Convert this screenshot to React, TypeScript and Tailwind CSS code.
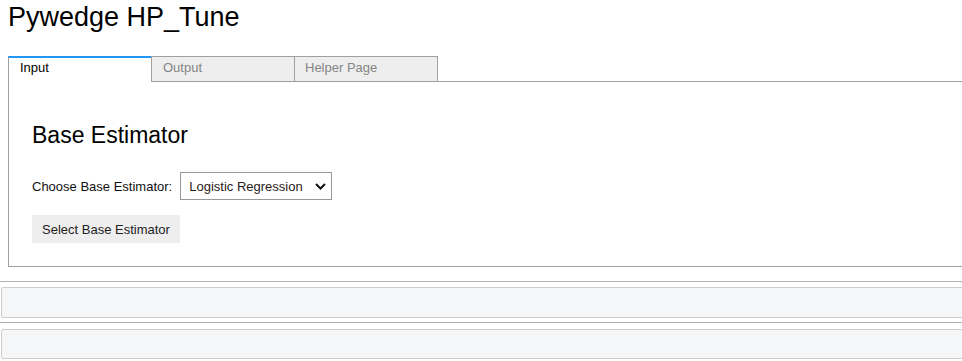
import React from "react";

export default function App() {
  return (
    <div className="w-[962px] h-[361px] overflow-hidden bg-white text-black font-['Liberation_Sans',Arial,sans-serif]">
      <h1 className="h-[56px] pt-[4px] pl-[8px] text-[27px] leading-[26px] font-normal">
        Pywedge HP_Tune
      </h1>
      <div className="pl-[8px] w-[1100px]">
        <div className="flex h-[26px] text-[13px] leading-[15px]">
          <div className="w-[143px] border-l border-l-[#a0a0a0] border-t-2 border-t-[#2196f3] bg-white pl-[11px] pt-[2px] text-black">
            Input
          </div>
          <div className="w-[143px] border border-r-0 border-[#a0a0a0] bg-[#eeeeee] pl-[11px] pt-[3px] text-[#858585]">
            Output
          </div>
          <div className="w-[144px] border border-[#a0a0a0] bg-[#eeeeee] pl-[10px] pt-[3px] text-[#858585]">
            Helper Page
          </div>
          <div className="flex-1 border-b border-[#a0a0a0]" />
        </div>
        <div className="border-l border-b border-[#a0a0a0] pl-[23px] pt-[40px] pb-[23px]">
          <h2 className="text-[23px] leading-[26px] font-normal">Base Estimator</h2>
          <div className="mt-[24px] flex h-[28px] items-center gap-[8px] text-[13px] leading-[15px]">
            <span className="text-[#111]">Choose Base Estimator:</span>
            <div className="flex h-[28px] w-[152px] items-center justify-between border border-[#999] pl-[8px] pr-[5px] text-[#2a1a1a]">
              <span>Logistic Regression</span>
              <svg width="11" height="7" viewBox="0 0 11 7">
                <polyline points="1,1 5.5,5.5 10,1" fill="none" stroke="#111" strokeWidth="2" />
              </svg>
            </div>
          </div>
          <div className="mt-[15px] flex">
            <div className="flex h-[28px] items-center bg-[#eeeeee] px-[10px] text-[13px] leading-[15px] text-[#222]">
              Select Base Estimator
            </div>
          </div>
        </div>
      </div>
      <div className="w-[1100px]">
        <div className="mt-[14px] h-px w-full bg-[#b0b0b0]" />
        <div className="ml-[1px] mt-[5px] h-[31px] rounded-[2px] border border-[#cccccc] bg-[#f5f6f8]" />
        <div className="mt-[4px] h-px w-full bg-[#b0b0b0]" />
        <div className="ml-[1px] mt-[6px] h-[30px] rounded-[2px] border border-[#cccccc] bg-[#f5f6f8]" />
      </div>
    </div>
  );
}
